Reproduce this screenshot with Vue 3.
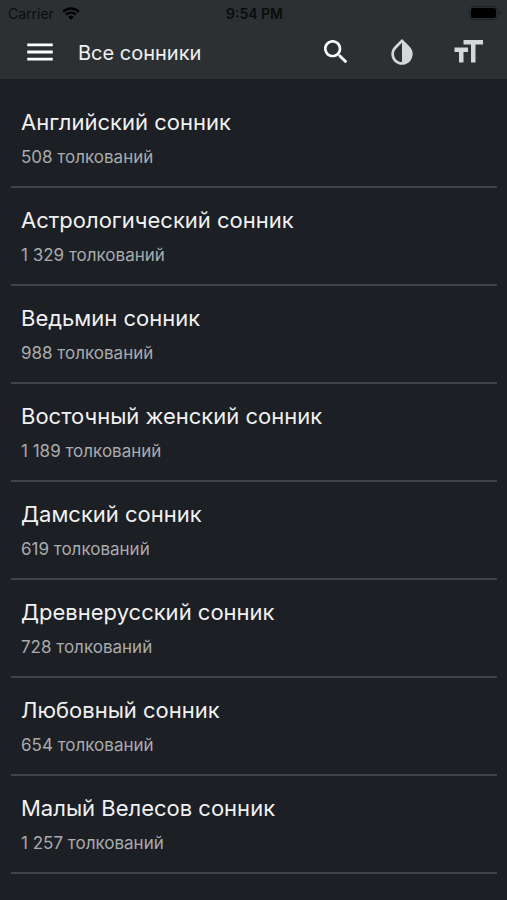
<script setup>
const books = [
  { name: 'Английский сонник', count: '508' },
  { name: 'Астрологический сонник', count: '1 329' },
  { name: 'Ведьмин сонник', count: '988' },
  { name: 'Восточный женский сонник', count: '1 189' },
  { name: 'Дамский сонник', count: '619' },
  { name: 'Древнерусский сонник', count: '728' },
  { name: 'Любовный сонник', count: '654' },
  { name: 'Малый Велесов сонник', count: '1 257' },
]
</script>

<template>
  <div class="screen">
    <header class="top">
      <div class="status">
        <div class="carrier">
          <span>Carrier</span>
          <svg class="wifi" viewBox="0 0 18 13" aria-hidden="true">
            <path d="M1.2 4.8a11 11 0 0 1 15.6 0M4 7.7a7.1 7.1 0 0 1 10 0" />
            <path class="dot" d="M9 12.7 6.2 9.9a4 4 0 0 1 5.6 0z" />
          </svg>
        </div>
        <span class="time">9:54 PM</span>
        <div class="power">
          <svg class="battery" viewBox="0 0 32 14" aria-hidden="true">
            <rect class="case" x="0.5" y="0.5" width="28" height="13" rx="4" />
            <rect x="2" y="2" width="25" height="10" rx="2" />
            <path class="cap" d="M30 5c2 .6 2 3.4 0 4z" />
          </svg>
        </div>
      </div>
      <nav class="bar">
        <button class="menu" type="button" aria-label="Меню">
          <svg viewBox="0 0 24 24"><path d="M3 18h18v-2H3v2zm0-5h18v-2H3v2zm0-7v2h18V6H3z" /></svg>
        </button>
        <h1>Все сонники</h1>
        <div class="actions">
          <button type="button" aria-label="Поиск">
            <svg viewBox="0 0 24 24"><path d="M15.5 14h-.79l-.28-.27C15.41 12.59 16 11.11 16 9.5 16 5.91 13.09 3 9.5 3S3 5.91 3 9.5 5.91 16 9.5 16c1.61 0 3.09-.59 4.23-1.57l.27.28v.79l5 4.99L20.49 19l-4.99-5zm-6 0C7.01 14 5 11.99 5 9.5S7.01 5 9.5 5 14 7.01 14 9.5 11.99 14 9.5 14z" /></svg>
          </button>
          <button class="soft" type="button" aria-label="Тема">
            <svg viewBox="0 0 24 24"><path d="M17.66 7.93 12 2.27 6.34 7.93c-3.12 3.12-3.12 8.19 0 11.31C7.9 20.8 9.95 21.58 12 21.58s4.1-.78 5.66-2.34c3.12-3.12 3.12-8.19 0-11.31zM12 19.59c-1.6 0-3.11-.62-4.24-1.76C6.62 16.69 6 15.19 6 13.59s.62-3.11 1.76-4.24L12 5.1v14.49z" /></svg>
          </button>
          <button class="soft size" type="button" aria-label="Размер шрифта">
            <svg viewBox="0 0 24 24"><path d="M9 4v3h5v12h3V7h5V4H9zm-6 8h3v7h3v-7h3V9H3v3z" /></svg>
          </button>
        </div>
      </nav>
    </header>
    <main>
      <ul class="list">
        <li v-for="book in books" :key="book.name">
          <a href="#">
            <span class="name">{{ book.name }}</span>
            <span class="count">{{ book.count }} толкований</span>
          </a>
        </li>
      </ul>
    </main>
  </div>
</template>

<style>
body {
  margin: 0;
  background: #1c1f24;
}
</style>

<style scoped>
.screen {
  min-height: 100vh;
  box-sizing: border-box;
  background: #1c1f24;
  color: #f0f1f2;
  font-family: Inter, "Liberation Sans", sans-serif;
}
.top {
  background: #2c3033;
}
.status {
  display: grid;
  grid-template-columns: 1fr auto 1fr;
  align-items: center;
  height: 26px;
  padding: 0 6px 0 8px;
  color: #0b0c0d;
  font-size: 14px;
}
.carrier {
  display: flex;
  align-items: center;
  gap: 8px;
}
.wifi {
  width: 18px;
  height: 13px;
  fill: none;
  stroke: #000;
  stroke-width: 2.4;
}
.wifi .dot {
  fill: #000;
  stroke: none;
}
.time {
  font-weight: 600;
}
.power {
  display: flex;
  justify-content: flex-end;
}
.battery {
  width: 32px;
  height: 14px;
  fill: #000;
}
.battery .case {
  fill: none;
  stroke: #1f2224;
}
.battery .cap {
  fill: #1f2224;
}
.bar {
  display: flex;
  align-items: center;
  height: 52px;
  padding: 0 22px 1px 23px;
}
button {
  display: flex;
  align-items: center;
  justify-content: center;
  width: 34px;
  height: 52px;
  padding: 0;
  border: 0;
  background: none;
  color: #fff;
}
button svg {
  flex: none;
  width: 32px;
  height: 32px;
  fill: currentColor;
}
.menu svg {
  width: 34px;
  height: 34px;
}
.soft {
  color: #d5d8da;
}
.size svg {
  width: 36px;
  height: 36px;
}
h1 {
  flex: 1;
  margin: 0;
  padding: 2px 0 0 21px;
  font-size: 20px;
  line-height: 28px;
  font-weight: 400;
}
.actions {
  display: flex;
  gap: 32px;
}
.list {
  margin: 0;
  padding: 11px 10px 0 11px;
  list-style: none;
}
li {
  border-bottom: 2px solid #3f4246;
}
a {
  display: flex;
  flex-direction: column;
  gap: 9px;
  padding: 17px 10px 18px;
  color: inherit;
  text-decoration: none;
}
.name {
  font-size: 22px;
  line-height: 30px;
}
.count {
  color: #a9abae;
  font-size: 17px;
  line-height: 22px;
}
</style>
